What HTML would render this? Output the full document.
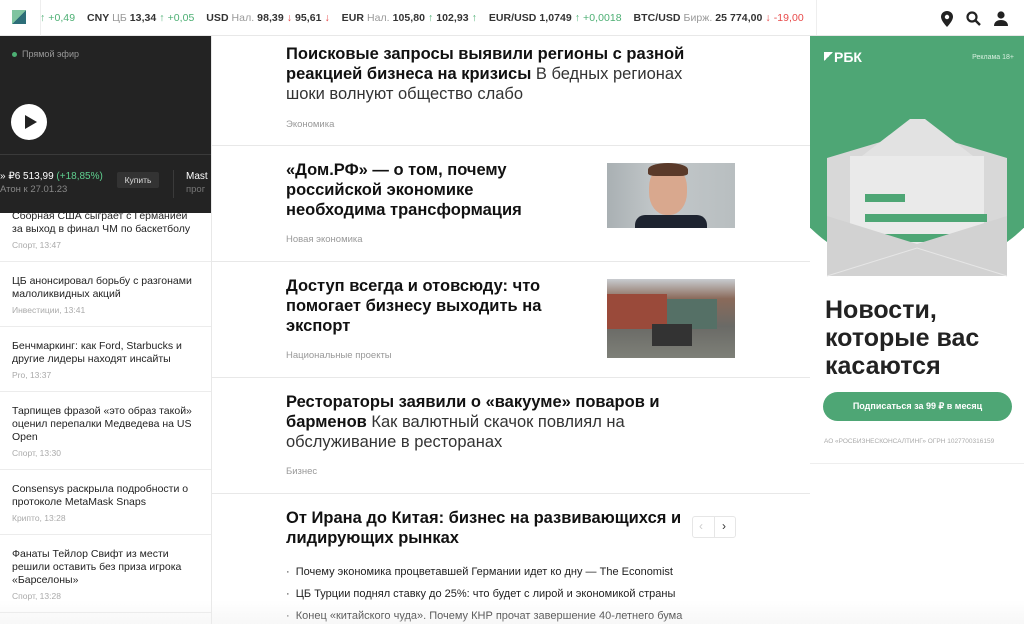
<!DOCTYPE html>
<html><head><meta charset="utf-8"><style>
*{margin:0;padding:0;box-sizing:border-box}
body{width:1024px;height:624px;overflow:hidden;background:#fff;font-family:"Liberation Sans",sans-serif;color:#222;position:relative}
.hdr{position:absolute;left:0;top:0;width:1024px;height:36px;border-bottom:1px solid #e8e8e8;background:#fff}
.tick{position:absolute;left:40px;top:12px;font-size:10.5px;white-space:nowrap;color:#333;font-weight:bold;letter-spacing:0.05px}
.tick .g{color:#4caf73;font-weight:normal}.tick .r{color:#e84a4a;font-weight:normal}.tick .l{color:#999;font-weight:normal}
.left{position:absolute;left:0;top:36px;width:212px;height:588px;border-right:1px solid #e8e8e8}
.item{position:absolute;left:0;width:211px;border-bottom:1px solid #ececec;padding-left:12px;font-size:10.5px;line-height:13px;color:#222}
.item .m{color:#aaa;font-size:8.5px;margin-top:3px}
.dark{position:absolute;left:0;top:36px;width:211px;height:177px;background:#232323}
.art{position:absolute;left:212px;width:598px;border-bottom:1px solid #e8e8e8}
.art h2{position:absolute;left:74px;font-size:16.5px;line-height:20px;font-weight:bold;color:#111}
.art h2 span{font-weight:normal;color:#333}
.art .c{position:absolute;left:74px;font-size:9.5px;color:#999}
.ad{position:absolute;left:810px;top:36px;width:214px;height:428px;border-bottom:1px solid #eee;overflow:hidden}
</style></head><body>
<div class="hdr">
<div style="position:absolute;left:12px;top:10px;width:14px;height:14px;background:linear-gradient(135deg,#7fc4a0 50%,#2d6e78 50%)"></div>
<div style="position:absolute;left:40px;top:0;width:1px;height:36px;background:#eee"></div>
<div class="tick"><span class="g">↑ +0,49</span>&nbsp;&nbsp;&nbsp; CNY <span class="l">ЦБ</span> 13,34 <span class="g">↑ +0,05</span>&nbsp;&nbsp;&nbsp; USD <span class="l">Нал.</span> 98,39 <span class="r">↓</span> 95,61 <span class="r">↓</span>&nbsp;&nbsp;&nbsp; EUR <span class="l">Нал.</span> 105,80 <span class="g">↑</span> 102,93 <span class="g">↑</span>&nbsp;&nbsp;&nbsp; EUR/USD 1,0749 <span class="g">↑ +0,0018</span>&nbsp;&nbsp;&nbsp; BTC/USD <span class="l">Бирж.</span> 25 774,00 <span class="r">↓ -19,00</span>&nbsp;&nbsp;&nbsp; II</div>
<div style="position:absolute;left:816px;top:0;width:208px;height:35px;background:#fff;border-left:1px solid #eee"></div>
<svg style="position:absolute;left:940px;top:11px" width="14" height="16" viewBox="0 0 14 16"><path d="M7 0C3.5 0 1 2.6 1 5.8 1 10 7 16 7 16s6-6 6-10.2C13 2.6 10.5 0 7 0z" fill="#222"/><circle cx="7" cy="6" r="2.2" fill="#fff"/></svg>
<svg style="position:absolute;left:966px;top:11px" width="15" height="15" viewBox="0 0 15 15"><circle cx="6" cy="6" r="4.5" stroke="#222" stroke-width="2.2" fill="none"/><path d="M9.5 9.5L14 14" stroke="#222" stroke-width="2.4"/></svg>
<svg style="position:absolute;left:994px;top:11px" width="14" height="15" viewBox="0 0 14 15"><circle cx="7" cy="4" r="3.6" fill="#222"/><path d="M0 15c0-4 3-6 7-6s7 2 7 6z" fill="#222"/></svg>
</div>

<div class="left">
<div class="item" style="top:172px;height:54px;padding-top:2px">Сборная США сыграет с Германией<br>за выход в финал ЧМ по баскетболу<div class="m">Спорт, 13:47</div></div>
<div class="item" style="top:226px;height:65px;padding-top:13px">ЦБ анонсировал борьбу с разгонами<br>малоликвидных акций<div class="m">Инвестиции, 13:41</div></div>
<div class="item" style="top:291px;height:65px;padding-top:13px">Бенчмаркинг: как Ford, Starbucks и<br>другие лидеры находят инсайты<div class="m">Pro, 13:37</div></div>
<div class="item" style="top:356px;height:78px;padding-top:13px">Тарпищев фразой «это образ такой»<br>оценил перепалки Медведева на US<br>Open<div class="m">Спорт, 13:30</div></div>
<div class="item" style="top:434px;height:65px;padding-top:13px">Consensys раскрыла подробности о<br>протоколе MetaMask Snaps<div class="m">Крипто, 13:28</div></div>
<div class="item" style="top:499px;height:78px;padding-top:13px">Фанаты Тейлор Свифт из мести<br>решили оставить без приза игрока<br>«Барселоны»<div class="m">Спорт, 13:28</div></div>
</div>

<div class="dark">
<div style="position:absolute;left:12px;top:16px;width:5px;height:5px;border-radius:50%;background:#4caf73"></div>
<div style="position:absolute;left:22px;top:13px;font-size:9px;color:#999">Прямой эфир</div>
<div style="position:absolute;left:11px;top:68px;width:36px;height:36px;border-radius:50%;background:#fff"></div>
<div style="position:absolute;left:25px;top:79px;width:0;height:0;border-left:12px solid #222;border-top:7px solid transparent;border-bottom:7px solid transparent"></div>
<div style="position:absolute;left:0;top:118px;width:211px;height:1px;background:#3a3a3a"></div>
<div style="position:absolute;left:0;top:135px;font-size:10px;color:#fff;white-space:nowrap">» ₽6 513,99 <span style="color:#5fcf8f">(+18,85%)</span></div>
<div style="position:absolute;left:0;top:148px;font-size:9.5px;color:#888">Атон к 27.01.23</div>
<div style="position:absolute;left:117px;top:136px;width:42px;height:16px;background:#333;border-radius:2px;color:#ddd;font-size:8.5px;text-align:center;line-height:16px">Купить</div>
<div style="position:absolute;left:173px;top:134px;width:1px;height:28px;background:#3a3a3a"></div>
<div style="position:absolute;left:186px;top:135px;font-size:10px;color:#fff">Mast</div>
<div style="position:absolute;left:186px;top:148px;font-size:9.5px;color:#777">прог</div>
</div>

<div class="art" style="top:36px;height:110px"><h2 style="top:8px;width:425px">Поисковые запросы выявили регионы с разной реакцией бизнеса на кризисы <span>В бедных регионах шоки волнуют общество слабо</span></h2><div class="c" style="top:83px">Экономика</div></div>
<div class="art" style="top:146px;height:116px"><h2 style="top:14px;width:265px">«Дом.РФ» — о том, почему российской экономике необходима трансформация</h2><div class="c" style="top:88px">Новая экономика</div>
<div style="position:absolute;left:395px;top:17px;width:128px;height:65px;overflow:hidden;background:linear-gradient(90deg,#a9b0b3,#c3c8ca 40%,#b8bec0)"><div style="position:absolute;left:42px;top:2px;width:38px;height:50px;border-radius:45%;background:#d9a88e"></div><div style="position:absolute;left:41px;top:0;width:40px;height:13px;border-radius:50% 50% 20% 20%;background:#5a3a2a"></div><div style="position:absolute;left:28px;top:52px;width:72px;height:15px;background:#1e2430;border-radius:10px 10px 0 0"></div></div></div>
<div class="art" style="top:262px;height:116px"><h2 style="top:14px;width:290px">Доступ всегда и отовсюду: что помогает бизнесу выходить на экспорт</h2><div class="c" style="top:88px">Национальные проекты</div>
<div style="position:absolute;left:395px;top:17px;width:128px;height:79px;overflow:hidden;background:linear-gradient(180deg,#c8ccd0 0,#8a6a5a 25%,#6a6a66 60%,#7e8078 100%)"><div style="position:absolute;left:0;top:15px;width:60px;height:35px;background:#9a4a3a"></div><div style="position:absolute;left:60px;top:20px;width:50px;height:30px;background:#557066"></div><div style="position:absolute;left:45px;top:45px;width:40px;height:22px;background:#333"></div></div></div>
<div class="art" style="top:378px;height:116px"><h2 style="top:14px;width:400px">Рестораторы заявили о «вакууме» поваров и барменов <span>Как валютный скачок повлиял на обслуживание в ресторанах</span></h2><div class="c" style="top:88px">Бизнес</div></div>
<div class="art" style="top:494px;height:130px;border:none"><h2 style="top:14px;width:420px">От Ирана до Китая: бизнес на развивающихся и лидирующих рынках</h2>
<div style="position:absolute;left:480px;top:22px;width:44px;height:22px;border:1px solid #e6e6e6;border-radius:3px"><div style="position:absolute;left:21px;top:0;width:1px;height:20px;background:#e6e6e6"></div><span style="position:absolute;left:6px;top:2px;font-size:12px;color:#ccc">‹</span><span style="position:absolute;left:29px;top:2px;font-size:12px;color:#333">›</span></div>
<div style="position:absolute;left:74px;top:67px;font-size:11px;line-height:22px;color:#222">· &nbsp;Почему экономика процветавшей Германии идет ко дну — The Economist<br>· &nbsp;ЦБ Турции поднял ставку до 25%: что будет с лирой и экономикой страны<br>· &nbsp;Конец «китайского чуда». Почему КНР прочат завершение 40-летнего бума</div></div>

<div class="ad">
<svg width="214" height="428" style="position:absolute;left:0;top:0">
<rect width="214" height="428" fill="#fff"/>
<ellipse cx="107" cy="90" rx="150" ry="145" fill="#4ea675"/>
<rect x="0" y="0" width="214" height="150" fill="#4ea675"/>
<path d="M17 122 L107 95 L197 122 L197 240 L17 240Z" fill="#d8d8d8"/>
<path d="M100 83 L115 83 L163 120 L163 230 L52 230 L52 120Z" fill="#e2e2e2"/>
<rect x="40" y="120" width="134" height="110" fill="#eaeaea"/>
<rect x="55" y="158" width="40" height="8" fill="#4ea675"/>
<rect x="55" y="178" width="122" height="8" fill="#4ea675"/>
<rect x="55" y="198" width="122" height="8" fill="#4ea675"/>
<path d="M17 180 L107 208 L197 180 L197 240 L17 240Z" fill="#d2d2d2"/>
<path d="M17 240 L107 212 L197 240" stroke="#e6e6e6" fill="none"/>
</svg>
<div style="position:absolute;left:14px;top:16px;width:9px;height:9px;background:linear-gradient(135deg,#fff 50%,transparent 50%)"></div>
<div style="position:absolute;left:24px;top:13px;font-size:14px;font-weight:bold;color:#fff">РБК</div>
<div style="position:absolute;right:10px;top:18px;font-size:7px;color:#d8f0e0">Реклама 18+</div>
<div style="position:absolute;left:15px;top:260px;font-size:25px;line-height:28px;font-weight:bold;color:#222">Новости,<br>которые вас<br>касаются</div>
<div style="position:absolute;left:13px;top:356px;width:189px;height:29px;border-radius:15px;background:#4ea675;color:#fff;font-size:9px;font-weight:bold;text-align:center;line-height:29px">Подписаться за 99 ₽ в месяц</div>
<div style="position:absolute;left:14px;top:402px;font-size:6.5px;color:#aaa;white-space:nowrap">АО «РОСБИЗНЕСКОНСАЛТИНГ» ОГРН 1027700316159</div>
</div>
<div style="position:absolute;left:0;top:600px;width:1024px;height:24px;background:linear-gradient(rgba(255,255,255,0),rgba(238,238,238,.45))"></div>
</body></html>
